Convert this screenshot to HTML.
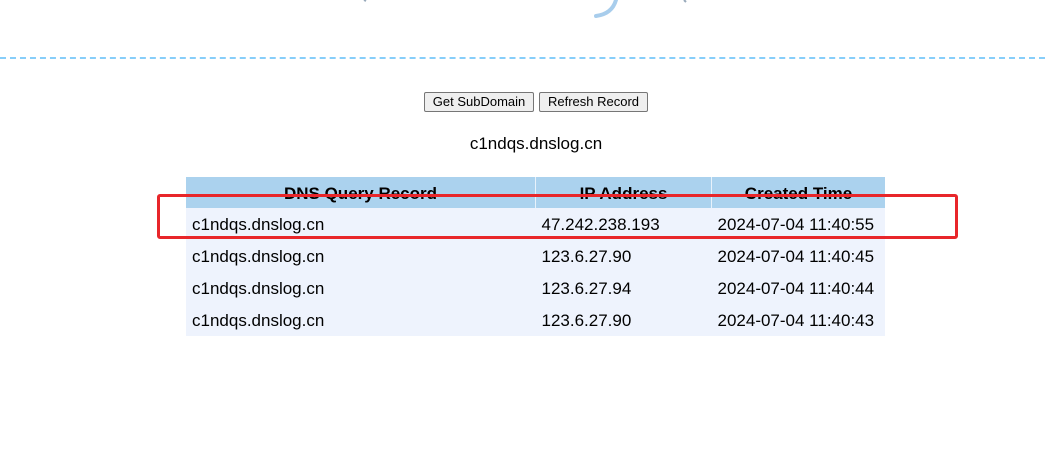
<!DOCTYPE html>
<html><head><meta charset="utf-8"><style>
body{margin:0;width:1045px;height:459px;background:#fff;position:relative;overflow:hidden;font-family:"Liberation Sans",sans-serif;}
.dash{position:absolute;left:0;top:57px;width:1045px;border-top:2px dashed #87cefa;}
.btn{position:absolute;top:92px;height:20px;box-sizing:border-box;border:1px solid #767676;border-radius:2px;background:#efefef;font-size:13px;line-height:18px;text-align:center;color:#000;}
.dom{position:absolute;left:0;width:1072px;text-align:center;top:134px;font-size:17px;}
table{position:absolute;left:186px;top:177px;width:699px;border-collapse:collapse;font-size:17px;}
th{background:#abd2ee;font-weight:bold;padding:2px 0 0 0;border-right:1px solid #e8f2fb;line-height:29px;}
td{background:#eef3fd;padding:2px 0 0 6px;line-height:30px;}
.red{position:absolute;left:157px;top:194px;width:795px;height:39px;border:3px solid #e8262a;border-radius:3px;}
</style></head><body>
<svg style="position:absolute;left:0;top:0" width="1045" height="30">
<path d="M596 16 Q612 14 616 0" stroke="#a8cdec" stroke-width="4" fill="none" stroke-linecap="round"/>
<path d="M364 0 L366 1" stroke="#9ab" stroke-width="2"/>
<path d="M684 0 L686 2" stroke="#9ab" stroke-width="2"/>
</svg>
<div class="dash"></div>
<div class="btn" style="left:424px;width:110px">Get SubDomain</div>
<div class="btn" style="left:539px;width:109px">Refresh Record</div>
<div class="dom">c1ndqs.dnslog.cn</div>
<table>
<tr><th style="width:349px">DNS Query Record</th><th style="width:175px">IP Address</th><th style="border-right:none">Created Time</th></tr>
<tr><td>c1ndqs.dnslog.cn</td><td>47.242.238.193</td><td>2024-07-04 11:40:55</td></tr>
<tr><td>c1ndqs.dnslog.cn</td><td>123.6.27.90</td><td>2024-07-04 11:40:45</td></tr>
<tr><td>c1ndqs.dnslog.cn</td><td>123.6.27.94</td><td>2024-07-04 11:40:44</td></tr>
<tr><td>c1ndqs.dnslog.cn</td><td>123.6.27.90</td><td>2024-07-04 11:40:43</td></tr>
</table>
<div class="red"></div>
</body></html>
